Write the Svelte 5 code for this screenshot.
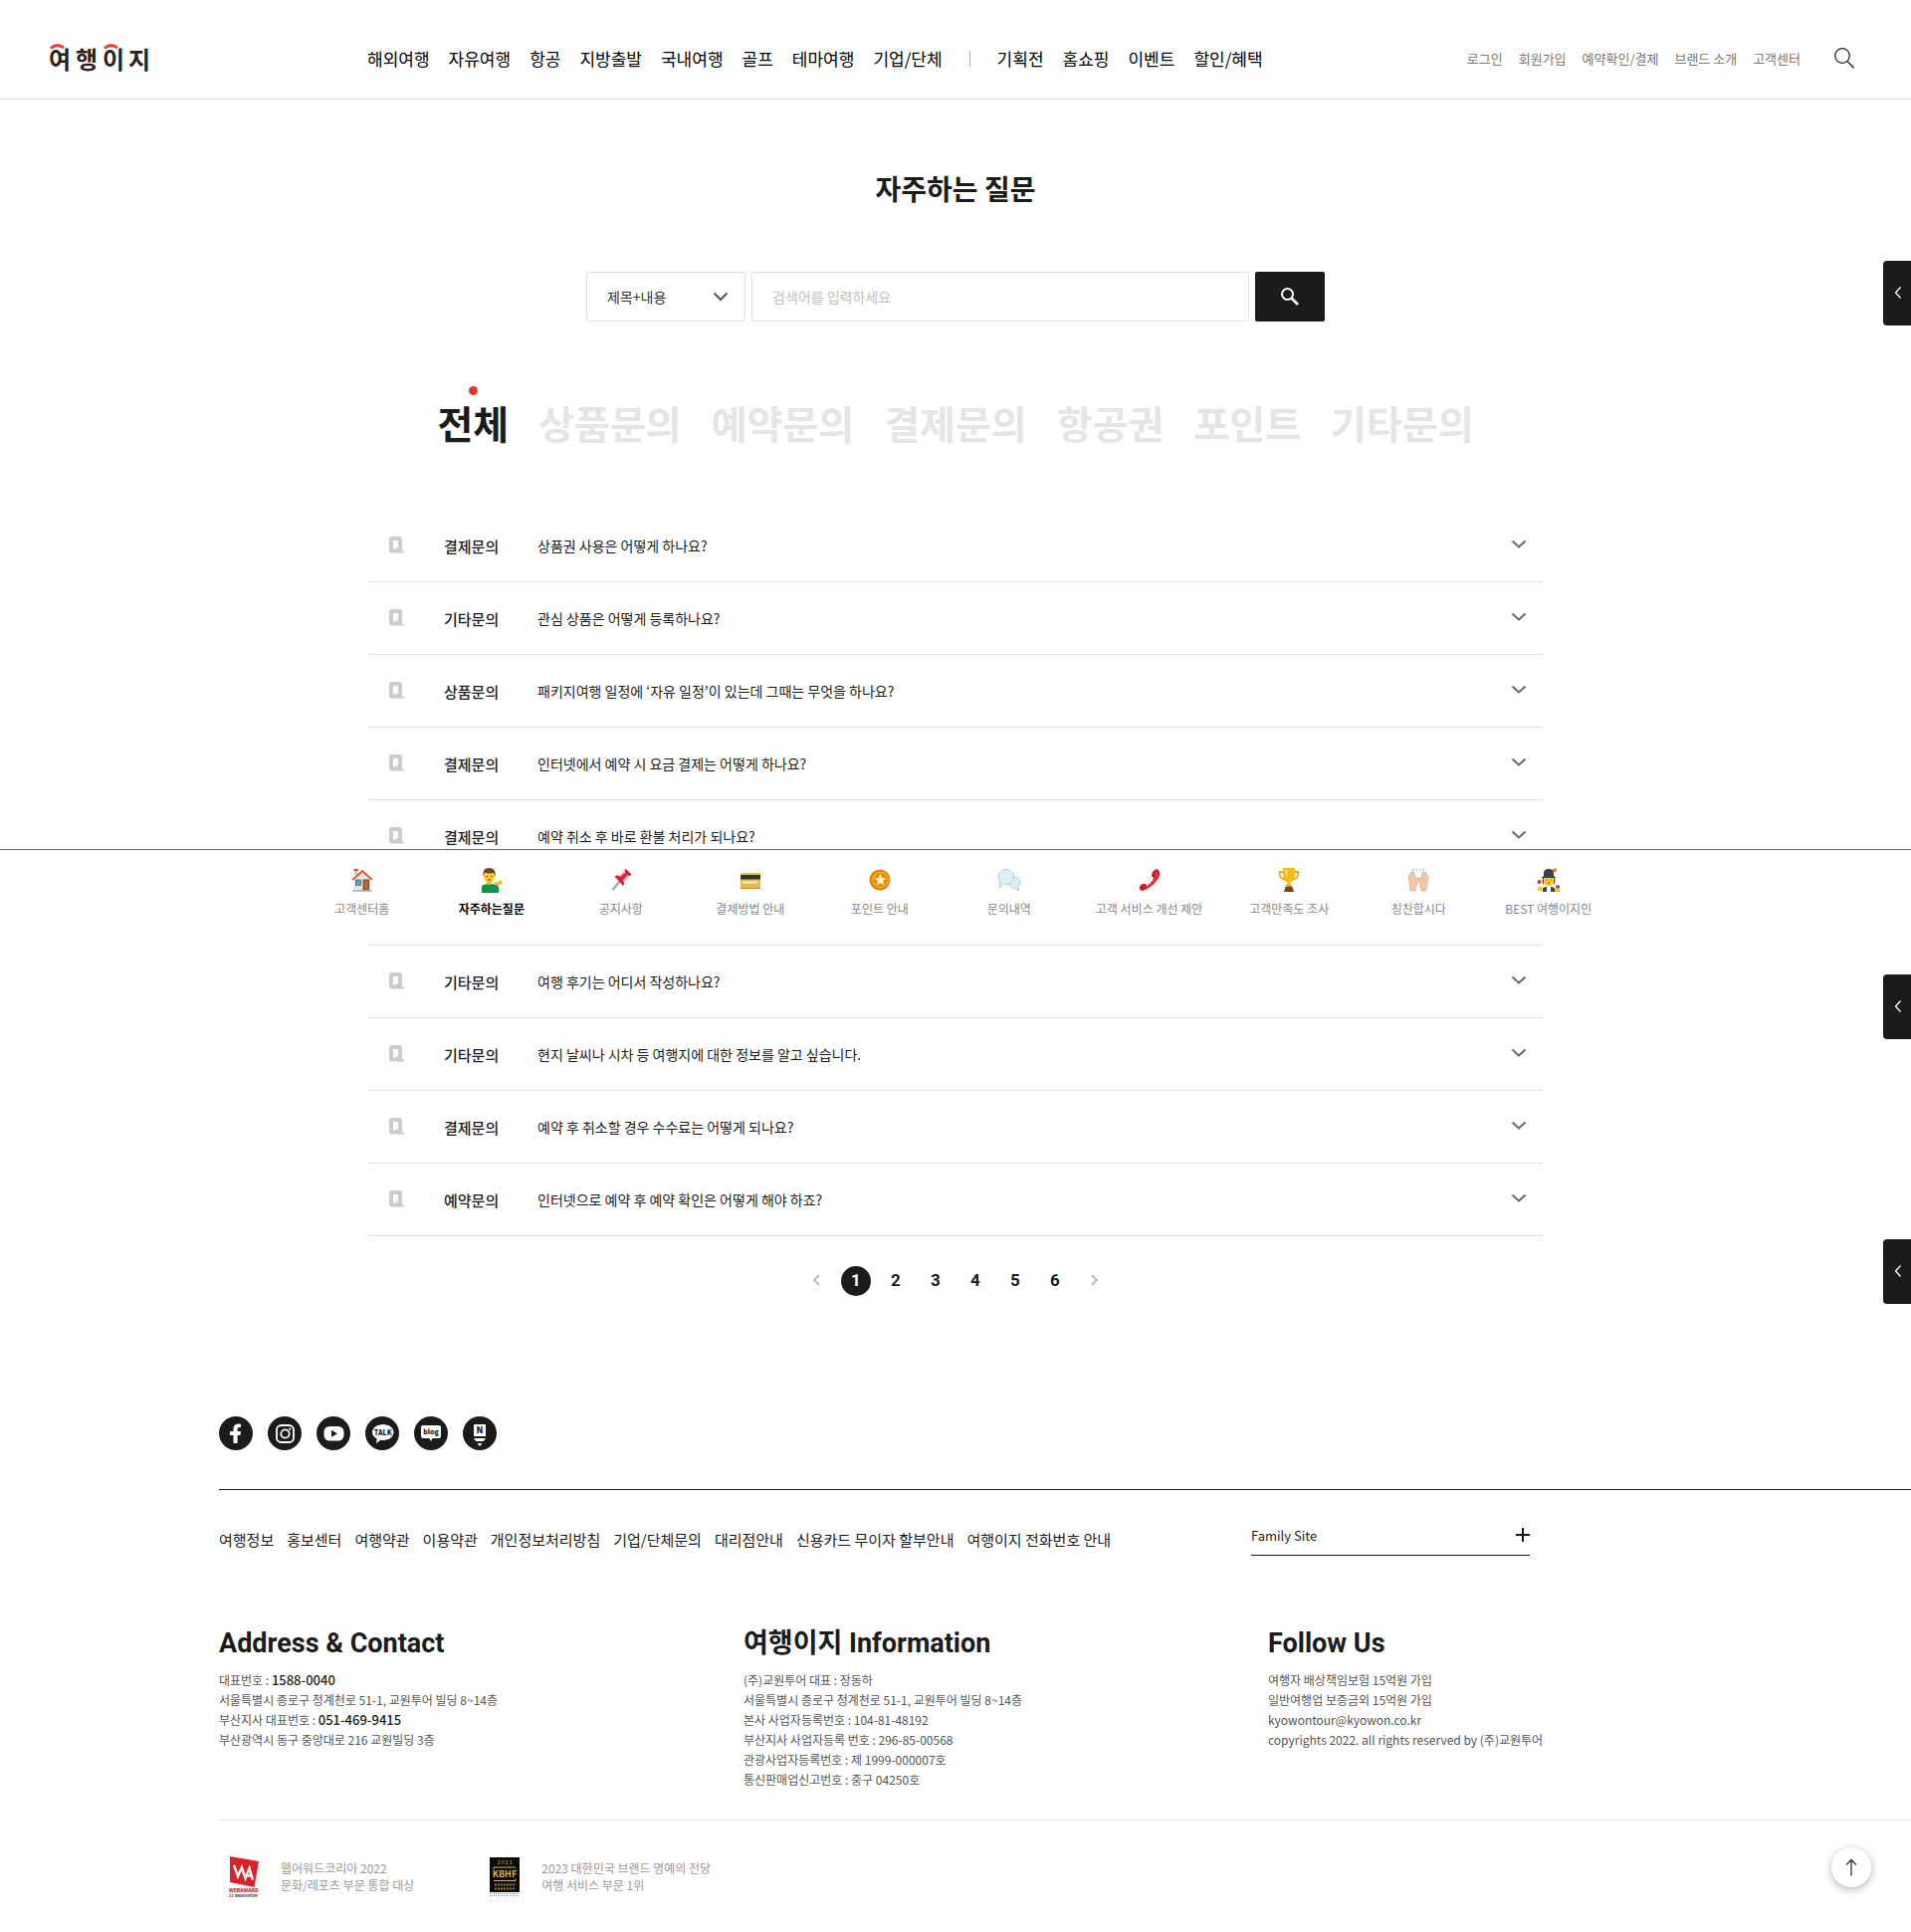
<script>
  const mainMenu = ['해외여행', '자유여행', '항공', '지방출발', '국내여행', '골프', '테마여행', '기업/단체'];
  const subMenu = ['기획전', '홈쇼핑', '이벤트', '할인/혜택'];
  const utilMenu = ['로그인', '회원가입', '예약확인/결제', '브랜드 소개', '고객센터'];
  const tabs = ['전체', '상품문의', '예약문의', '결제문의', '항공권', '포인트', '기타문의'];
  const faqs = [
    ['결제문의', '상품권 사용은 어떻게 하나요?'],
    ['기타문의', '관심 상품은 어떻게 등록하나요?'],
    ['상품문의', '패키지여행 일정에 ‘자유 일정’이 있는데 그때는 무엇을 하나요?'],
    ['결제문의', '인터넷에서 예약 시 요금 결제는 어떻게 하나요?'],
    ['결제문의', '예약 취소 후 바로 환불 처리가 되나요?'],
    ['', ''],
    ['기타문의', '여행 후기는 어디서 작성하나요?'],
    ['기타문의', '현지 날씨나 시차 등 여행지에 대한 정보를 알고 싶습니다.'],
    ['결제문의', '예약 후 취소할 경우 수수료는 어떻게 되나요?'],
    ['예약문의', '인터넷으로 예약 후 예약 확인은 어떻게 해야 하죠?'],
  ];
  const pages = [1, 2, 3, 4, 5, 6];
  const centerMenu = [
    ['home', '고객센터홈'],
    ['person', '자주하는질문'],
    ['pin', '공지사항'],
    ['card', '결제방법 안내'],
    ['coin', '포인트 안내'],
    ['chat', '문의내역'],
    ['phone', '고객 서비스 개선 제안'],
    ['trophy', '고객만족도 조사'],
    ['hands', '칭찬합시다'],
    ['juggler', 'BEST 여행이지인'],
  ];
  const socials = ['Facebook', 'Instagram', 'YouTube', 'TALK', 'blog', 'Naver'];
  const policies = ['여행정보', '홍보센터', '여행약관', '이용약관', '개인정보처리방침', '기업/단체문의', '대리점안내', '신용카드 무이자 할부안내', '여행이지 전화번호 안내'];

  let tab = $state('전체');
  let page = $state(1);
  let keyword = $state('');
</script>

<div class="page">
  <header>
    <a class="logo" href="#home" aria-label="여행이지">
      <svg width="104" height="34" viewBox="0 0 104 34">
        <text y="27" x="-1 26 53 79" font-size="24" font-weight="700" fill="#2b2020">여행이지</text>
        <path d="M1 6.500Q7.500 1 14 6M55 6.500Q61.500 1 68 6" fill="none" stroke="#e8443a" stroke-width="3" />
      </svg>
    </a>
    <nav class="gnb" aria-label="주 메뉴">
      {#each mainMenu as m}<a href="#menu">{m}</a>{/each}
      <i class="bar"></i>
      {#each subMenu as m}<a href="#menu">{m}</a>{/each}
    </nav>
    <nav class="util" aria-label="회원 메뉴">
      {#each utilMenu as m}<a href="#util">{m}</a>{/each}
    </nav>
    <button class="find" aria-label="검색 열기">
      <svg width="20" height="21" viewBox="0 0 20 21" fill="none" stroke="#222" stroke-width="1.300">
        <circle cx="8" cy="8" r="7.300" /><path d="M13 13.500L19.500 20.300" />
      </svg>
    </button>
  </header>

  <main>
    <h1>자주하는 질문</h1>

    <form class="search" onsubmit={(e) => e.preventDefault()}>
      <div class="selectbox">
        <select aria-label="검색 조건"><option>제목+내용</option><option>제목</option><option>내용</option></select>
        <svg width="16" height="10" viewBox="0 0 16 10"><path d="M1.500 1.500L8 8L14.500 1.500" fill="none" stroke="#555" stroke-width="2" /></svg>
      </div>
      <input type="text" placeholder="검색어를 입력하세요" aria-label="검색어" bind:value={keyword} />
      <button class="submit" aria-label="검색">
        <svg width="20" height="20" viewBox="0 0 20 20" fill="none" stroke="#fff" stroke-width="2">
          <circle cx="7.500" cy="7.500" r="5.500" /><path d="M11.500 11.500L18 18" stroke-width="2.600" />
        </svg>
      </button>
    </form>

    <div class="tabs" role="tablist">
      {#each tabs as t}
        <button role="tab" class:on={tab === t} aria-selected={tab === t} onclick={() => (tab = t)}>{t}</button>
      {/each}
    </div>

    <ul class="faq">
      {#each faqs as [category, question]}
        <li>
          <button>
            <svg class="q" width="15" height="18" viewBox="0 0 15 18">
              <rect x="2" y="2" width="9" height="12.500" rx="1" fill="none" stroke="#ccc" stroke-width="4" stroke-linejoin="round" />
              <path d="M6.500 11.500h3v3h5.500v2H9z" fill="#ccc" />
            </svg>
            <span class="category">{category}</span>
            <span class="question">{question}</span>
            <svg class="arrow" width="16" height="10" viewBox="0 0 16 10"><path d="M1.500 1.500L8 7.500L14.500 1.500" fill="none" stroke="#666" stroke-width="2" /></svg>
          </button>
        </li>
      {/each}
    </ul>

    <nav class="paging" aria-label="페이지">
      <button aria-label="이전"><svg width="8" height="12" viewBox="0 0 8 12"><path d="M7 1L2 6L7 11" /></svg></button>
      {#each pages as p}
        <button class:current={page === p} onclick={() => (page = p)}>{p}</button>
      {/each}
      <button aria-label="다음"><svg width="8" height="12" viewBox="0 0 8 12"><path d="M1 1L6 6L1 11" /></svg></button>
    </nav>
  </main>

  <footer>
    <div class="social">
      {#each socials as s, i}
        <a href="#social" aria-label={s}>
          <svg width="34" height="34" viewBox="0 0 34 34">
            {#if i === 0}
              <path d="M14.500 27V19H11v-4h3.500v-2.500c0-3.300 2-5 5-5 .9 0 1.700.1 2.500.2v3.400h-1.700c-1.400 0-1.700.8-1.700 1.800V15h3.300l-.5 4h-2.800v8z" fill="#fff" />
            {:else if i === 1}
              <g fill="none" stroke="#fff" stroke-width="1.800"><rect x="9" y="9" width="17" height="17" rx="4.500" /><circle cx="17.500" cy="17.500" r="4.200" /></g>
              <circle cx="22.300" cy="12.600" r="1.200" fill="#fff" />
            {:else if i === 2}
              <rect x="7.500" y="10" width="20" height="14.500" rx="5.500" fill="#fff" /><path d="M15 13.700v7l6-3.500z" fill="#1b1b1b" />
            {:else if i === 3}
              <path d="M18 8c5.800 0 10.500 3.600 10.500 8S23.800 24 18 24l-2.500-.2-4.500 3.200.7-4.500C9 21 7 18.700 7 16c0-4.400 5-8 11-8z" fill="#fff" />
              <text x="17.800" y="18.600" text-anchor="middle" font-size="7" font-weight="900" fill="#1b1b1b">TALK</text>
            {:else if i === 4}
              <path d="M9 9h16q2 0 2 2v9q0 2-2 2h-6.500L17 25l-1.500-3H9q-2 0-2-2v-9q0-2 2-2z" fill="#fff" />
              <text x="17" y="17.800" text-anchor="middle" font-size="7" font-weight="900" fill="#1b1b1b">blog</text>
            {:else}
              <path d="M11 8h12v12H11zM11 22h12l-2.300 3h-7.400zM14.500 27h5L17 30z" fill="#fff" />
              <text x="17" y="17.400" text-anchor="middle" font-size="9" font-weight="900" fill="#1b1b1b">N</text>
            {/if}
          </svg>
        </a>
      {/each}
    </div>

    <div class="links">
      <nav aria-label="약관 및 안내">
        {#each policies as p}<a href="#policy">{p}</a>{/each}
      </nav>
      <button class="family">
        Family Site
        <svg width="14" height="14" viewBox="0 0 14 14"><path d="M7 0v14M0 7h14" stroke="#1b1b1b" stroke-width="2" /></svg>
      </button>
    </div>

    <div class="info">
      <section>
        <h2>Address &amp; Contact</h2>
        <p>대표번호 : <b>1588-0040</b></p>
        <p>서울특별시 종로구 청계천로 51-1, 교원투어 빌딩 8~14층</p>
        <p>부산지사 대표번호 : <b>051-469-9415</b></p>
        <p>부산광역시 동구 중앙대로 216 교원빌딩 3층</p>
      </section>
      <section>
        <h2>여행이지 Information</h2>
        <p>(주)교원투어 대표 : 장동하</p>
        <p>서울특별시 종로구 청계천로 51-1, 교원투어 빌딩 8~14층</p>
        <p>본사 사업자등록번호 : 104-81-48192</p>
        <p>부산지사 사업자등록 번호 : 296-85-00568</p>
        <p>관광사업자등록번호 : 제 1999-000007호</p>
        <p>통신판매업신고번호 : 중구 04250호</p>
      </section>
      <section>
        <h2>Follow Us</h2>
        <p>여행자 배상책임보험 15억원 가입</p>
        <p>일반여행업 보증금외 15억원 가입</p>
        <p>kyowontour@kyowon.co.kr</p>
        <p>copyrights 2022. all rights reserved by (주)교원투어</p>
      </section>
    </div>

    <div class="awards">
      <div class="award">
        <svg width="30" height="41" viewBox="0 0 30 41">
          <path d="M1 0L30 5L25.500 31L1 26z" fill="#d8232a" />
          <path d="M5 9L9 20L13 11L16.500 22L20.500 12L24 23.500M17.500 19.500h5" fill="none" stroke="#fff" stroke-width="2.400" />
          <text x="0" y="36" font-size="5" font-weight="900" fill="#d8232a">WEBAWARD</text>
          <text x="0" y="41" font-size="4" font-weight="700" fill="#d8232a">22 <tspan fill="#333">INNOVATOR</tspan></text>
        </svg>
        <p>웹어워드코리아 2022<br />문화/레포츠 부문 통합 대상</p>
      </div>
      <div class="award">
        <svg width="30" height="40" viewBox="0 0 30 40">
          <rect width="30" height="35" fill="#0c0a06" />
          <path d="M0 36.500h30M0 38.500h30" stroke="#999" stroke-dasharray="1 1" />
          <g fill="#d9b64c" text-anchor="middle">
            <text x="15" y="7" font-size="5">2 0 2 3</text>
            <text x="15" y="20" font-size="9" font-weight="700">KBHF</text>
          </g>
          <path d="M4 12V10h22M4 23.500h22v-2" fill="none" stroke="#d9b64c" />
          <path d="M5 27.500h20M5 31.500h20" stroke="#9a7c2c" stroke-width="2" stroke-dasharray="2 1" />
        </svg>
        <p>2023 대한민국 브랜드 명예의 전당<br />여행 서비스 부문 1위</p>
      </div>
    </div>
  </footer>

  <nav class="center" aria-label="고객센터 메뉴">
    {#each centerMenu as [icon, label]}
      <a href="#center" class:on={icon === 'person'}>
        <svg width="24" height="24" viewBox="0 0 24 24">
          {#if icon === 'home'}
            <path d="M4 1.500h3.500V7H4z" fill="#c9cdd0" /><path d="M3.500 1h4.500v2H3.500z" fill="#e8502e" />
            <path d="M3.500 11L12 4l8.500 7v12h-17z" fill="#e4e6e9" /><path d="M2 12L12 3l10 9" fill="none" stroke="#e8562f" stroke-width="2" />
            <rect x="5.500" y="12" width="5" height="5.500" fill="#5d9fb4" stroke="#35646f" stroke-width=".7" /><rect x="13" y="12" width="5.500" height="10" fill="#b46839" stroke="#834420" />
            <path d="M2.500 23h19" stroke="#aaa" stroke-width="1.500" />
          {:else if icon === 'person'}
            <path d="M2 25v-6q0-3 8-3t9 3v6z" fill="#129447" /><path d="M7 12h5v4q-2.500 2-5 0z" fill="#f0b21c" />
            <circle cx="9.500" cy="9" r="5.500" fill="#ffca28" /><path d="M3.500 9Q2 0 9.500 0T15.500 9L14 5Q8 6 5 4.500z" fill="#6d4322" />
            <path d="M6.500 8.500h1.500M11 8.500h1.500M8 12h3" stroke="#5d3a1a" /><path d="M15 16l-1-2 4 .5 3.500-3.500v2.500h1.500q-1 4-5 4z" fill="#f7b718" />
          {:else if icon === 'pin'}
            <path d="M11 13L3.500 22" stroke="#90a4ae" stroke-width="2" /><path d="M5.500 8.500q4-2 6 .5l4.500-4-.5-3L17 1l5.500 5.500-1.500 1.500-3-.5-4 5q2 3 0 5.500z" fill="#d32535" /><path d="M10.500 9L15 4.500M15 13l4-5" stroke="#f06a72" stroke-width="1.200" />
          {:else if icon === 'card'}
            <rect x="2" y="5" width="20" height="16" rx="1.500" fill="#e8b849" /><path d="M2 7h20v4.500H2z" fill="#343434" /><path d="M4 13.500h15v2H4z" fill="#f9efce" /><path d="M2 20.500h20" stroke="#c78e25" />
          {:else if icon === 'coin'}
            <circle cx="12" cy="12" r="10.500" fill="#dc850c" /><circle cx="12.500" cy="12" r="8.500" fill="#f9a825" /><circle cx="12.500" cy="12" r="7" fill="#e88c12" />
            <path d="M12.500 6l1.700 4 4.300.3-3.300 2.800 1 4.300-3.700-2.300-3.700 2.300 1-4.300-3.300-2.800 4.300-.3z" fill="#fff3b0" />
          {:else if icon === 'chat'}
            <g fill="#dff1f5" stroke="#a5cfd8"><path d="M18 9c6 1 6 8 2.500 9.500L22 23l-4-2.500c-4 0-6-2-6-5.500S14 9 18 9z" /><path d="M9 1.500c9.500 0 10 14 1 15L6.500 16 2 20l1-5.500C-1.500 9.500 2 1.500 9 1.500z" /></g>
          {:else if icon === 'phone'}
            <path d="M17 2q4-2 5 2t-4 10-13 9q-4-1-3-4 2-4 6-3l1 2q6-4 7-8l-2-2q0-4 3-6z" fill="#d3182b" /><path d="M18 4q3 0 0 6T8 20" fill="none" stroke="#ff6169" />
          {:else if icon === 'trophy'}
            <path d="M6 4H2.500q0 7 6 8M18 4h3.500q0 7-6 8" fill="none" stroke="#edab19" stroke-width="1.800" />
            <path d="M6 0h12v6q0 7-4.500 8.500v4h-3v-4Q6 13 6 6z" fill="#f7b921" /><path d="M8.500 2h2v7q-2-2-2-7z" fill="#ffe579" /><path d="M8.500 19h7l1.500 5H7z" fill="#81431e" /><path d="M9 18h6" stroke="#e29817" stroke-width="2" />
          {:else if icon === 'hands'}
            <path d="M2 8q1-2 2 0V5q1-2 2 0V4q1-1 2 0l1 7q2-3 3 0l-3 12H4zM22 8q-1-2-2 0V5q-1-2-2 0V4q-1-1-2 0l-1 7q-2-3-3 0l3 12h5z" fill="#efc7a9" stroke="#d8a580" stroke-width=".6" />
            <path d="M7 3L6 1M10.500 3l-.5-2M13.500 3l.5-2M17 3l1-2" stroke="#91caf2" stroke-width="1.300" />
          {:else}
            <path d="M6 24v-4l6-2 6 2v4z" fill="#444" /><path d="M10 18h4v6h-4z" fill="#fff" /><circle cx="12" cy="12.500" r="5.500" fill="#ffca28" />
            <path d="M6 10q-1 5 1 7V9zM18 10q1 5-1 7V9z" fill="#6d4322" /><path d="M7 8V5q0-4 5-4t5 4v3l2.500 2h-15z" fill="#37424a" />
            <circle cx="2.500" cy="14" r="2" fill="#dc2841" /><circle cx="18" cy="2.300" r="2" fill="#f47836" /><circle cx="21" cy="19" r="2" fill="#874399" />
            <path d="M1 21q0-3 4-2v4H2zM23 24h-5v-3l5-1z" fill="#ffbd17" /><path d="M9.500 12h1M13.500 12h1M11 15h2" stroke="#5d3a1a" />
          {/if}
        </svg>
        <span>{label}</span>
      </a>
    {/each}
  </nav>

  {#each ['one', 'two', 'three'] as place}
    <button class="side {place}" aria-label="퀵메뉴 열기">
      <svg width="8" height="14" viewBox="0 0 8 14"><path d="M6.500 1.500L1.500 7L6.500 12.500" fill="none" stroke="#fff" stroke-width="1.300" /></svg>
    </button>
  {/each}
  <button class="top" aria-label="맨 위로">
    <svg width="14" height="18" viewBox="0 0 14 18"><path d="M7 17.500V1.500M2 6.500L7 1.500L12 6.500" fill="none" stroke="#333" stroke-width="1.300" /></svg>
  </button>
</div>

<style>
  :global(body) { background: #fff; }
  .page {
    position: relative;
    overflow: hidden;
    color: #1b1b1b;
    font-family: 'Noto Sans CJK KR', 'Noto Sans', sans-serif;
    font-size: 14px;
    line-height: 20px;
  }
  .page * { box-sizing: border-box; }
  a { color: inherit; text-decoration: none; white-space: nowrap; }
  button, input, select { font-family: inherit; color: inherit; padding: 0; border: 0; background: none; }
  button { cursor: pointer; }
  svg { display: block; flex: none; overflow: visible; }
  h1, h2, p, ul { margin: 0; padding: 0; }

  header { display: flex; align-items: center; height: 100px; padding: 18px 57px 0 50px; border-bottom: 1px solid #e1e1e1; }
  .logo { flex: 0 0 319px; }
  .gnb { display: flex; align-items: center; gap: 19px; font-size: 17px; color: #000; }
  .bar { width: 1px; height: 16px; margin: 0 8px; background: #aaa; }
  .util { display: flex; gap: 16px; margin-left: auto; font-size: 13px; color: #777; }
  .find { margin-left: 34px; }

  h1 { padding-top: 69px; font-size: 28px; line-height: 40px; font-weight: 700; text-align: center; }
  .search { display: flex; justify-content: center; gap: 6px; margin-top: 64px; }
  .selectbox { position: relative; width: 160px; }
  select { width: 100%; height: 50px; padding-left: 20px; border: 1px solid #e1e1e1; border-radius: 2px; appearance: none; font-size: 14px; color: #333; background: #fff; }
  .selectbox svg { position: absolute; right: 17px; top: 20px; pointer-events: none; }
  input { width: 500px; height: 50px; padding: 0 20px; border: 1px solid #e1e1e1; border-radius: 2px; font-size: 14px; }
  input::placeholder { color: #c0c0c0; opacity: 1; }
  .submit { display: flex; align-items: center; justify-content: center; width: 70px; height: 50px; border-radius: 2px; background: #1b1b1b; }

  .tabs { display: flex; justify-content: center; gap: 30px; margin-top: 71px; }
  .tabs button { position: relative; font-size: 39px; line-height: 60px; font-weight: 700; color: #e5e5e5; white-space: nowrap; }
  .tabs .on { color: #1b1b1b; }
  .tabs .on::before { content: ''; position: absolute; left: calc(50% - 4px); top: -6px; width: 9px; height: 9px; border-radius: 50%; background: #e5332d; }

  .faq { max-width: 1180px; margin: 58px auto 0; list-style: none; }
  .faq li { border-bottom: 1px solid #e1e1e1; }
  .faq button { display: flex; align-items: center; width: 100%; height: 72px; padding: 0 16px 0 21px; text-align: left; }
  .q { margin-right: 40px; }
  .category { width: 94px; font-size: 15px; font-weight: 500; }
  .question { flex: 1; font-size: 14px; }
  .arrow { margin-bottom: 2px; }

  .paging { display: flex; justify-content: center; gap: 10px; margin-top: 30px; }
  .paging button { display: flex; align-items: center; justify-content: center; width: 30px; height: 30px; padding-bottom: 2px; border-radius: 50%; font: 700 17px/28px Roboto, sans-serif; }
  .paging .current { background: #1b1b1b; color: #fff; }
  .paging path { fill: none; stroke: #bbb; stroke-width: 2; }

  footer { margin-top: 121px; padding-left: 220px; }
  .social { display: flex; gap: 15px; padding-bottom: 39px; border-bottom: 1px solid #1b1b1b; }
  .social a { border-radius: 50%; background: #1b1b1b; }
  .links { display: flex; align-items: flex-start; padding-top: 28px; }
  .links nav { display: flex; flex: 0 0 1037px; gap: 13px; padding-top: 12px; font-size: 15px; }
  .family { display: flex; align-items: center; justify-content: space-between; width: 280px; height: 38px; padding-bottom: 3px; border-bottom: 1px solid #1b1b1b; font-size: 13px; }
  .info { display: grid; grid-template-columns: repeat(3, 527px); margin-top: 68px; padding-bottom: 30px; font-size: 12px; color: #555; }
  h2 { margin-bottom: 7px; font: 700 27px/40px Roboto, 'Noto Sans CJK KR', sans-serif; color: #1b1b1b; }
  b { font-size: 13px; font-weight: 500; color: #1b1b1b; }
  .info p { line-height: 20px; }
  .awards { display: flex; gap: 76px; padding: 36px 0 35px 10px; border-top: 1px solid #e5e5e5; font-size: 12px; line-height: 17px; color: #999; }
  .award { display: flex; align-items: center; gap: 22px; height: 41px; }
  .award p { padding-bottom: 2px; white-space: nowrap; }

  .center { position: absolute; left: 0; right: 0; top: 853px; display: flex; justify-content: center; height: 96px; padding-top: 18px; border-top: 1px solid #666; background: #fff; font-size: 12px; color: #888; }
  .center a { display: flex; flex-direction: column; align-items: center; gap: 7px; min-width: 130px; padding: 0 22px; }
  .center .on { font-weight: 700; color: #000; }

  .side { position: absolute; right: 0; display: flex; align-items: center; width: 28px; height: 65px; padding: 0 0 2px 11px; border-radius: 4px 0 0 4px; background: #1b1b1b; }
  .one { top: 262px; }
  .two { top: 979px; }
  .three { top: 1245px; }
  .top { position: absolute; right: 40px; bottom: 45px; display: flex; align-items: center; justify-content: center; width: 40px; height: 40px; border-radius: 50%; background: #fff; box-shadow: 0 2px 8px rgba(0, 0, 0, 0.3); }
</style>
